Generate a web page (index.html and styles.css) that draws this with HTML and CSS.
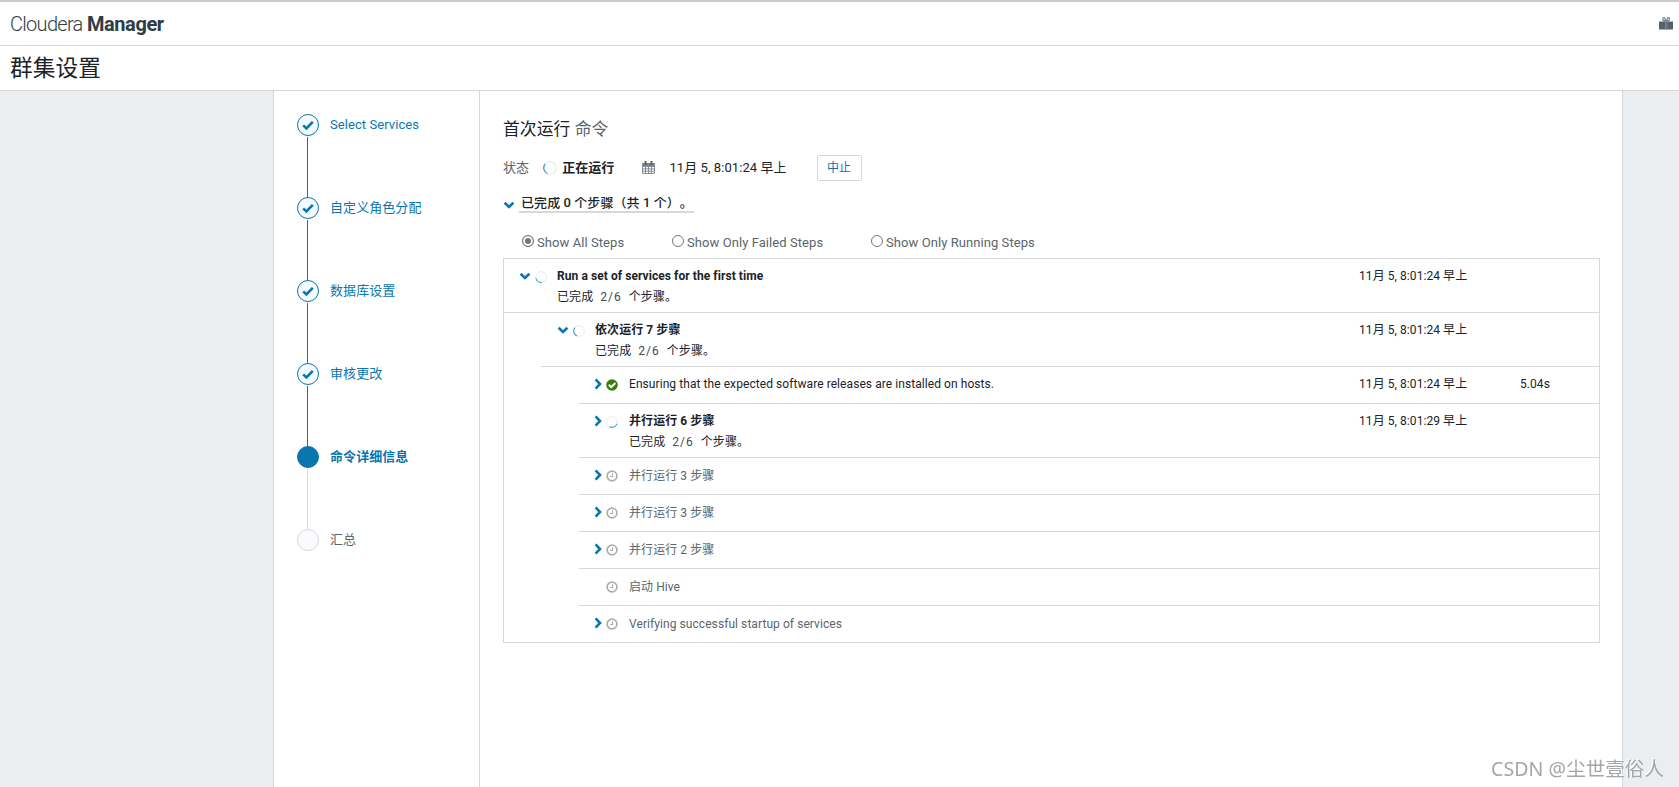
FILE: index.html
```html
<!DOCTYPE html>
<html lang="zh-CN">
<head>
    <meta charset="UTF-8">
    <meta name="viewport" content="width=device-width, initial-scale=1.0">
    <title>群集设置 - Cloudera Manager</title>
    <link rel="stylesheet" href="styles.css">
</head>
<body>
    <svg class="sprite" width="0" height="0">
        <symbol id="check" viewBox="0 0 12 12"><path d="M1.2 6.4L4.4 9.4L10.8 2.8" fill="none" stroke="currentColor" stroke-width="2.6"/></symbol>
        <symbol id="down" viewBox="0 0 12 12"><path d="M1.6 3.8L6 8L10.4 3.8" fill="none" stroke="currentColor" stroke-width="2.6"/></symbol>
        <symbol id="right" viewBox="0 0 12 12"><path d="M3.6 1.4L8 6L3.6 10.6" fill="none" stroke="currentColor" stroke-width="2.6"/></symbol>
        <symbol id="done" viewBox="0 0 12 12"><circle cx="6" cy="6" r="5.8" fill="#3a7d0c"/><path d="M2.8 5.8L5.2 8.2L9.4 4" fill="none" stroke="#fff" stroke-width="2"/></symbol>
        <symbol id="clock" viewBox="0 0 12 12"><circle cx="6" cy="6" r="4.9" fill="none" stroke="#a9afb3" stroke-width="1.7"/><path d="M6.5 3.2V6.5H3.8" fill="none" stroke="#a9afb3" stroke-width="1.1"/></symbol>
        <symbol id="spin-left" viewBox="0 0 14 14"><circle cx="7" cy="7" r="6.2" fill="none" stroke="#e6e8e9" stroke-width="1.1"/><path d="M2.2 3A6.2 6.2 0 0 0 4.6 12.7" fill="none" stroke="#4ba1ca" stroke-width="1.3"/></symbol>
        <symbol id="spin-bottom" viewBox="0 0 14 14"><circle cx="7" cy="7" r="6.2" fill="none" stroke="#e6e8e9" stroke-width="1.1"/><path d="M1 8.6A6.2 6.2 0 0 0 8 13.2" fill="none" stroke="#4ba1ca" stroke-width="1.3"/></symbol>
        <symbol id="spin-right" viewBox="0 0 14 14"><circle cx="7" cy="7" r="6.2" fill="none" stroke="#e6e8e9" stroke-width="1.1"/><path d="M4.4 12.6A6.2 6.2 0 0 0 12.8 9.2" fill="none" stroke="#4ba1ca" stroke-width="1.3"/></symbol>
    </svg>

    <header class="navbar">
        <div class="navbar__logo"><span>Cloudera</span> <b>Manager</b></div>
        <svg class="navbar__gift" width="14" height="13" viewBox="0 0 14 13">
            <path d="M6.8 4.2L5.6 0.8H4V3.4L6.8 4.2M7.4 4.2L8.6 0.8H10.2V3.4L7.4 4.2" fill="none" stroke="#68788a" stroke-width="1.1"/>
            <path d="M0 4.5H14V12.5H0z" fill="#56626b"/>
            <path d="M6.5 4.5V12.5M8 4.5V12.5" stroke="#8397ae" stroke-width="0.7"/>
        </svg>
    </header>
    <h1 class="title">群集设置</h1>

    <div class="wizard">
        <nav class="steps">
            <div class="steps__item"><span class="steps__dot"><svg width="12" height="12"><use href="#check"/></svg></span>Select Services</div>
            <div class="steps__item"><span class="steps__dot"><svg width="12" height="12"><use href="#check"/></svg></span>自定义角色分配</div>
            <div class="steps__item"><span class="steps__dot"><svg width="12" height="12"><use href="#check"/></svg></span>数据库设置</div>
            <div class="steps__item"><span class="steps__dot"><svg width="12" height="12"><use href="#check"/></svg></span>审核更改</div>
            <div class="steps__item steps__item--active"><span class="steps__dot"></span>命令详细信息</div>
            <div class="steps__item steps__item--todo"><span class="steps__dot"></span>汇总</div>
        </nav>

        <main class="command">
            <h2 class="command__title">首次运行 <small>命令</small></h2>

            <div class="status">
                <span class="status__label">状态</span>
                <svg class="status__spinner" width="14" height="14"><use href="#spin-left"/></svg>
                <b class="status__value">正在运行</b>
                <svg class="status__calendar" width="13" height="13" viewBox="0 0 13 13">
                    <path d="M0.5 2.5H12.5V12.5H0.5zM0.5 5.5H12.5M0.5 7.9H12.5M0.5 10.2H12.5M3.5 5V12.5M6.5 5V12.5M9.5 5V12.5" fill="none" stroke="#7c858b" stroke-width="0.9"/>
                    <path d="M0.5 2H12.5V5H0.5z" fill="#7c858b"/>
                    <path d="M3.5 0V4M9.5 0V4" stroke="#5a656c" stroke-width="2"/>
                </svg>
                <span class="status__date">11月 5, 8:01:24 早上</span>
                <button class="status__abort">中止</button>
            </div>

            <div class="summary">
                <svg width="12" height="12"><use href="#down"/></svg>
                <span class="summary__text">已完成 0 个步骤（共 1 个）。</span>
            </div>

            <div class="filters">
                <label class="filters__all"><input type="radio" name="filter" checked>Show All Steps</label>
                <label class="filters__failed"><input type="radio" name="filter">Show Only Failed Steps</label>
                <label><input type="radio" name="filter">Show Only Running Steps</label>
            </div>

            <div class="table">
                <div class="row row--level1 row--running">
                    <svg class="row__arrow" width="12" height="12"><use href="#down"/></svg>
                    <svg class="row__icon" width="12" height="12"><use href="#spin-bottom"/></svg>
                    <div class="row__name"><b>Run a set of services for the first time</b><p>已完成 <i>2/6</i> 个步骤。</p></div>
                    <span class="row__date">11月 5, 8:01:24 早上</span>
                    <span class="row__duration"></span>
                </div>
                <div class="row row--level2 row--running">
                    <svg class="row__arrow" width="12" height="12"><use href="#down"/></svg>
                    <svg class="row__icon" width="12" height="12"><use href="#spin-left"/></svg>
                    <div class="row__name"><b>依次运行 7 步骤</b><p>已完成 <i>2/6</i> 个步骤。</p></div>
                    <span class="row__date">11月 5, 8:01:24 早上</span>
                    <span class="row__duration"></span>
                </div>
                <div class="row">
                    <svg class="row__arrow" width="12" height="12"><use href="#right"/></svg>
                    <svg class="row__icon" width="12" height="12"><use href="#done"/></svg>
                    <div class="row__name">Ensuring that the expected software releases are installed on hosts.</div>
                    <span class="row__date">11月 5, 8:01:24 早上</span>
                    <span class="row__duration">5.04s</span>
                </div>
                <div class="row row--running">
                    <svg class="row__arrow" width="12" height="12"><use href="#right"/></svg>
                    <svg class="row__icon" width="12" height="12"><use href="#spin-right"/></svg>
                    <div class="row__name"><b>并行运行 6 步骤</b><p>已完成 <i>2/6</i> 个步骤。</p></div>
                    <span class="row__date">11月 5, 8:01:29 早上</span>
                    <span class="row__duration"></span>
                </div>
                <div class="row row--pending">
                    <svg class="row__arrow" width="12" height="12"><use href="#right"/></svg>
                    <svg class="row__icon" width="12" height="12"><use href="#clock"/></svg>
                    <div class="row__name">并行运行 3 步骤</div>
                </div>
                <div class="row row--pending">
                    <svg class="row__arrow" width="12" height="12"><use href="#right"/></svg>
                    <svg class="row__icon" width="12" height="12"><use href="#clock"/></svg>
                    <div class="row__name">并行运行 3 步骤</div>
                </div>
                <div class="row row--pending">
                    <svg class="row__arrow" width="12" height="12"><use href="#right"/></svg>
                    <svg class="row__icon" width="12" height="12"><use href="#clock"/></svg>
                    <div class="row__name">并行运行 2 步骤</div>
                </div>
                <div class="row row--pending">
                    <span class="row__arrow"></span>
                    <svg class="row__icon" width="12" height="12"><use href="#clock"/></svg>
                    <div class="row__name">启动 Hive</div>
                </div>
                <div class="row row--pending">
                    <svg class="row__arrow" width="12" height="12"><use href="#right"/></svg>
                    <svg class="row__icon" width="12" height="12"><use href="#clock"/></svg>
                    <div class="row__name">Verifying successful startup of services</div>
                </div>
            </div>
        </main>
    </div>

    <div class="watermark">CSDN @尘世壹俗人</div>
</body>
</html>
```
FILE: styles.css
```css
* {
    box-sizing: border-box;
}

body {
    margin: 0;
    height: 100vh;
    display: flex;
    flex-direction: column;
    overflow: hidden;
    background-color: #eaeef1;
    color: #1b2329;
    font-family: Roboto, "Noto Sans CJK SC", sans-serif;
    font-size: 13px;
    line-height: 20px;
    letter-spacing: 0.07px;
}

svg {
    display: block;
    flex: none;
}

.sprite {
    position: absolute;
}

.navbar {
    flex: none;
    height: 46px;
    padding: 0 6px 0 10px;
    display: flex;
    align-items: center;
    justify-content: space-between;
    background-color: #fff;
    border-top: 2px solid #c9c9c9;
    border-bottom: 1px solid #d6d8da;
}

.navbar__logo {
    margin-top: 1px;
    font-size: 20px;
    letter-spacing: -0.7px;
    color: #2f3c44;
    white-space: pre;
}

.navbar__logo span {
    font-weight: 300;
}

.navbar__logo b {
    letter-spacing: -0.4px;
}

.title {
    flex: none;
    margin: 0;
    height: 45px;
    padding-left: 10px;
    background-color: #fff;
    border-bottom: 1px solid #d6d8da;
    font-size: 22.7px;
    font-weight: 400;
    line-height: 45px;
}

.wizard {
    flex: 1;
    display: flex;
    width: 1350px;
    margin-left: 273px;
    background-color: #fff;
    border: solid #d6d8da;
    border-width: 0 1px;
}

.steps {
    width: 206px;
    padding: 23px 0 0 23px;
    border-right: 1px solid #d6d8da;
}

.steps__item {
    position: relative;
    display: flex;
    gap: 11px;
    height: 83px;
    color: #0a76ae;
    line-height: 22px;
}

/* connector down to the next step */
.steps__item::after {
    content: "";
    position: absolute;
    left: 10px;
    top: 23px;
    width: 1px;
    height: 60px;
    background-color: #0a76ae;
}

.steps__dot {
    flex: none;
    width: 22px;
    height: 22px;
    display: flex;
    align-items: center;
    justify-content: center;
    border: 1px solid #0a76ae;
    border-radius: 50%;
    background-color: #f5faff;
}

.steps__item--active {
    font-weight: 700;
}

.steps__item--active .steps__dot {
    background-color: #0a76ae;
}

.steps__item--active::after {
    background-color: #d6d8da;
}

.steps__item--todo {
    color: #5a656c;
}

.steps__item--todo .steps__dot {
    border-color: #d6d8da;
    background-color: #fafbff;
}

.steps__item--todo::after {
    display: none;
}

.command {
    flex: 1;
    padding: 26px 22px 0 23px;
}

.command__title {
    margin: 0;
    font-size: 16.8px;
    font-weight: 400;
    line-height: 24px;
}

.command__title small {
    font-size: 16.8px;
    color: #5a656c;
}

.status {
    display: flex;
    align-items: center;
    height: 27px;
    margin-top: 13px;
}

.status__label {
    color: #5a656c;
}

.status__spinner {
    margin: 1px 5px 0 14px;
}

.status__calendar {
    margin: 0 14px 0 28px;
}

.status__abort {
    width: 45px;
    height: 26px;
    margin-left: 30px;
    padding: 0;
    background-color: #fff;
    border: 1px solid #d6d8da;
    border-radius: 2px;
    color: #0a76ae;
    font: inherit;
    font-size: 12px;
}

.summary {
    display: flex;
    gap: 4px;
    height: 16px;
    margin-top: 16px;
    color: #0a76ae;
}

.summary svg {
    margin-top: 2px;
}

.summary__text {
    width: 175px;
    padding-left: 2px;
    border-bottom: 2px solid #d6d8da;
    color: #1b2329;
    font-weight: 500;
    line-height: 12px;
    white-space: nowrap;
    overflow: hidden;
    text-spacing-trim: space-all;
}

.filters {
    display: flex;
    height: 45px;
    padding: 19px 0 0 19px;
    color: #5a656c;
    line-height: 22px;
}

.filters label {
    display: flex;
}

.filters input {
    appearance: none;
    width: 12px;
    height: 12px;
    margin: 3px 3px 0 0;
    border: 1px solid #767676;
    border-radius: 50%;
    background-color: #fff;
}

.filters input:checked {
    background-color: #767676;
    box-shadow: inset 0 0 0 2px #fff;
}

.filters__all {
    width: 150px;
}

.filters__failed {
    width: 199px;
}

.table {
    border: 1px solid #d6d8da;
    font-size: 12px;
}

.row {
    display: flex;
    height: 37px;
    margin-left: 75px;
    padding: 7px 0 0 13px;
    border-bottom: 1px solid #d6d8da;
}

.row:last-child {
    height: 36px;
    border-bottom: none;
}

.row--running {
    height: 54px;
}

.row--level1 {
    margin-left: 0;
    padding-left: 15px;
}

.row--level2 {
    margin-left: 37px;
    padding-left: 16px;
}

.row__arrow {
    width: 12px;
    margin-top: 4px;
    color: #0a76ae;
}

.row__icon {
    margin: 5px 11px 0 2px;
}

.row--level1 .row__icon,
.row--level2 .row__icon {
    margin-left: 4px;
    margin-right: 10px;
}

.row__name {
    flex: 1;
}

.row__name p {
    margin: 1px 0 0;
    word-spacing: 4px;
}

.row__name i {
    font-style: normal;
    letter-spacing: 1px;
    color: #414b52;
}

.row__date {
    width: 161px;
}

.row__duration {
    width: 79px;
}

.row--pending {
    color: #5a656c;
    line-height: 22px;
}

.watermark {
    position: fixed;
    right: 15px;
    bottom: 8px;
    color: #a3a5a7;
    font-family: "Noto Sans", "Noto Sans CJK SC", sans-serif;
    font-size: 19.5px;
    text-shadow: -1px -1px 0 #fff;
}
```
